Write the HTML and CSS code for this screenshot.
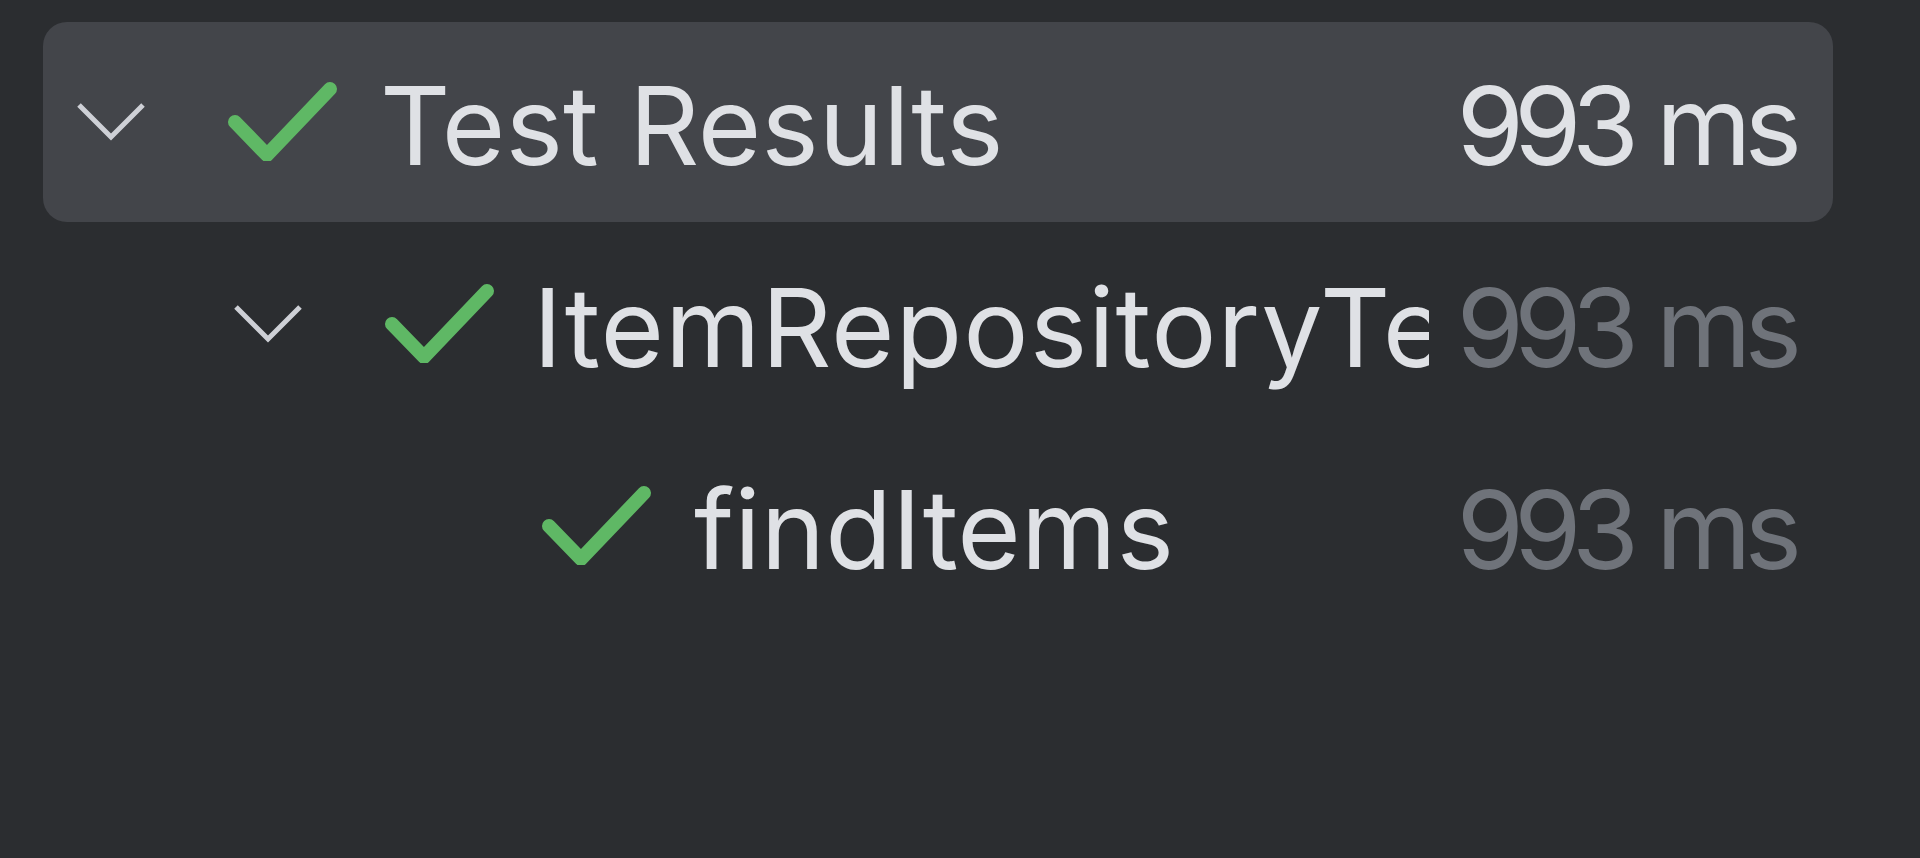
FILE: index.html
```html
<!DOCTYPE html>
<html>
<head>
<meta charset="utf-8">
<link rel="stylesheet" href="styles.css">
</head>
<body>
<div class="tree">
  <div class="row selected level0">
    <svg class="chev" width="70" height="42" viewBox="0 0 70 42"><polyline points="3,5 35,37 67,5" fill="none" stroke="#ced0d6" stroke-width="5"/></svg>
    <svg class="check" width="110" height="80" viewBox="0 0 110 80"><polyline points="8,41 40,74 103,8" fill="none" stroke="#5fb865" stroke-width="14" stroke-linecap="round" stroke-linejoin="round"/></svg>
    <span class="name">Test Results</span>
    <span class="time bright"><span class="num">993</span><span class="unit">ms</span></span>
  </div>
  <div class="row level1">
    <svg class="chev" width="70" height="42" viewBox="0 0 70 42"><polyline points="3,5 35,37 67,5" fill="none" stroke="#ced0d6" stroke-width="5"/></svg>
    <svg class="check" width="110" height="80" viewBox="0 0 110 80"><polyline points="8,41 40,74 103,8" fill="none" stroke="#5fb865" stroke-width="14" stroke-linecap="round" stroke-linejoin="round"/></svg>
    <span class="name wide">ItemRepositoryTest</span>
    <span class="time clipgap"><span class="num">993</span><span class="unit">ms</span></span>
  </div>
  <div class="row level2">
    <span class="chev-space"></span>
    <svg class="check" width="110" height="80" viewBox="0 0 110 80"><polyline points="8,41 40,74 103,8" fill="none" stroke="#5fb865" stroke-width="14" stroke-linecap="round" stroke-linejoin="round"/></svg>
    <span class="name">findItems</span>
    <span class="time"><span class="num">993</span><span class="unit">ms</span></span>
  </div>
</div>
</body>
</html>
```
FILE: styles.css
```css
html, body {
  margin: 0;
  padding: 0;
  background: #2b2d30;
  height: 100%;
  overflow: hidden;
}
.tree {
  padding: 22px 87px 0 43px;
  display: flex;
  flex-direction: column;
  gap: 2px;
  font-family: Inter, "Noto Sans", sans-serif;
  font-size: 109px;
  color: #dfe1e5;
}
.row {
  height: 200px;
  display: flex;
  align-items: center;
  padding-right: 38px;
  border-radius: 24px;
}
.row.selected {
  background: #43454a;
}
.level0 { padding-left: 33px; }
.level1 { padding-left: 190px; }
.level2 { padding-left: 347px; }
.chev, .chev-space {
  flex: none;
  width: 70px;
  height: 42px;
  margin-top: -2px;
}
.check {
  flex: none;
  margin-left: 81px;
  margin-top: -2px;
}
.name {
  flex: 1 1 auto;
  min-width: 0;
  margin-left: 43px;
  margin-top: 5px;
  white-space: nowrap;
  overflow: hidden;
}
.name.wide {
  margin-left: 39px;
  letter-spacing: 1px;
}
.time {
  flex: none;
  margin-left: 34px;
  margin-top: 5px;
  color: #6f737a;
  white-space: nowrap;
}
.time.clipgap {
  margin-left: 27px;
}
.time.bright {
  color: #dfe1e5;
}
.num {
  letter-spacing: -10px;
}
.unit {
  margin-left: 27px;
  letter-spacing: -7px;
}
```
